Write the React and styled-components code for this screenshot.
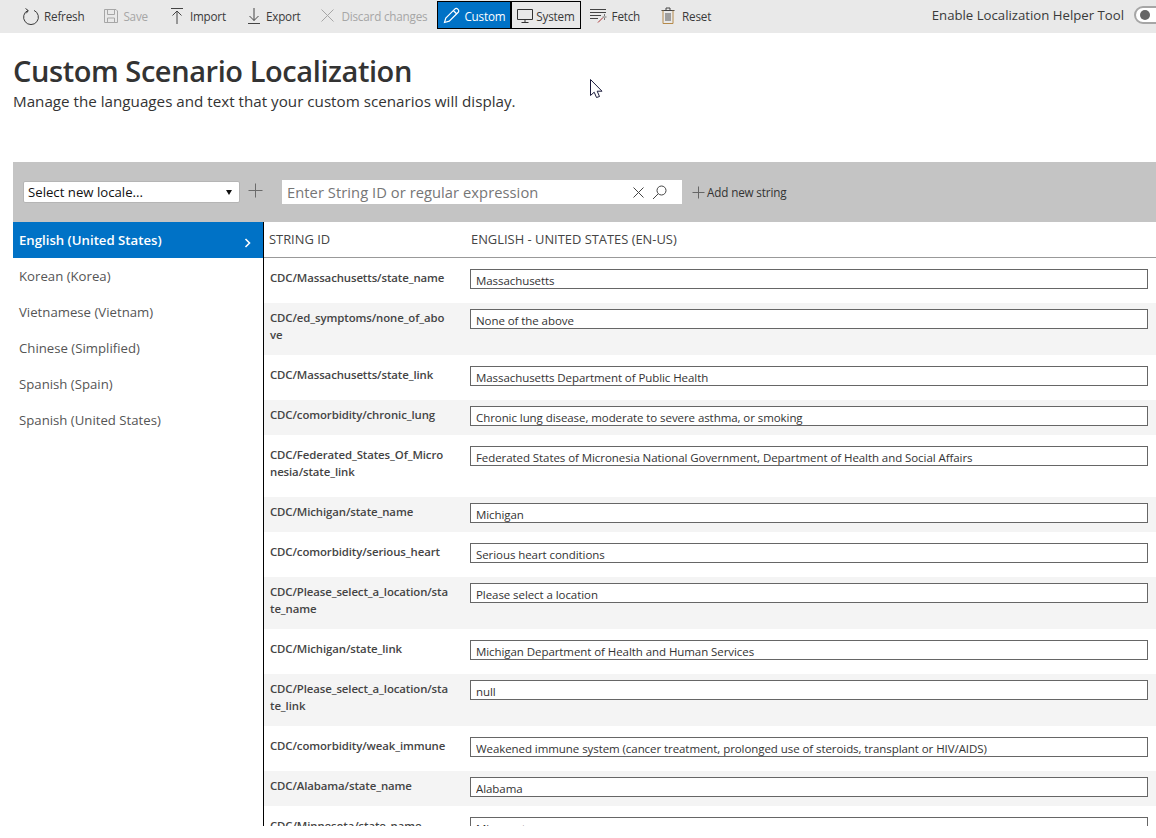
import styled, { createGlobalStyle } from "styled-components";

const GlobalStyle = createGlobalStyle`
  html, body {
    margin: 0;
    padding: 0;
    background: #fff;
    font-family: "Open Sans", "Noto Sans", sans-serif;
  }
`;

const Page = styled.div`
  position: relative;
  width: 1156px;
  height: 826px;
  overflow: hidden;
  background: #fff;
  color: #333;
`;

const Toolbar = styled.div`
  display: flex;
  align-items: center;
  height: 33px;
  padding: 1px 0 4px 22px;
  box-sizing: border-box;
  background: #e9e9e9;
`;

const ToolButton = styled.div`
  display: flex;
  align-items: center;
  gap: ${(p) => p.$gap || 4}px;
  height: 28px;
  margin-right: ${(p) => p.$after || 0}px;
  padding: ${(p) => (p.$boxed ? "1px 5px 0" : "1px 0 0")};
  box-sizing: border-box;
  border: ${(p) => (p.$boxed ? "1px solid #000" : "none")};
  background: ${(p) => (p.$active ? "#0072c6" : "transparent")};
  color: ${(p) => (p.$active ? "#fff" : p.$disabled ? "#a6a6a6" : "#3a3a3a")};
  font-size: 11.7px;
  letter-spacing: -0.2px;
  white-space: nowrap;
`;

const ToggleArea = styled.div`
  display: flex;
  align-items: center;
  gap: 10px;
  margin-left: auto;
  margin-right: -18px;
  font-size: 13.2px;
  color: #3a3a3a;
`;

const ToggleTrack = styled.div`
  display: flex;
  align-items: center;
  width: 40px;
  height: 18px;
  padding-left: 4px;
  box-sizing: border-box;
  border: 2px solid #a6a6a6;
  border-radius: 9px;
  background: #fff;
`;

const ToggleKnob = styled.div`
  width: 10px;
  height: 10px;
  border-radius: 50%;
  background: #666;
`;

const Header = styled.header`
  padding: 20px 0 0 13px;
  height: 129px;
  box-sizing: border-box;
`;

const Title = styled.h1`
  margin: 0;
  font-size: 29px;
  line-height: 36px;
  font-weight: 600;
  letter-spacing: -0.42px;
  color: #333;
`;

const Subtitle = styled.p`
  margin: 0;
  font-size: 15.2px;
  line-height: 24px;
  color: #333;
`;

const FilterBand = styled.div`
  display: flex;
  align-items: center;
  height: 60px;
  margin-left: 13px;
  padding: 0 0 0 10px;
  box-sizing: border-box;
  background: #c4c4c4;
`;

const LocaleSelect = styled.div`
  display: flex;
  align-items: center;
  justify-content: space-between;
  width: 217px;
  height: 22px;
  padding: 0 4px;
  box-sizing: border-box;
  background: #fff;
  border: 1px solid #b5b5b5;
  border-radius: 2px;
  font-size: 13.2px;
  color: #111;
`;

const Caret = styled.span`
  width: 0;
  height: 0;
  margin-right: 3px;
  border-left: 3px solid transparent;
  border-right: 3px solid transparent;
  border-top: 5px solid #111;
`;

const AddLocale = styled.span`
  display: flex;
  margin: -3px 19px 0 8px;
  color: #6b6b6b;
`;

const SearchBox = styled.div`
  display: flex;
  align-items: center;
  width: 400px;
  height: 24px;
  padding: 0 15px 0 5px;
  box-sizing: border-box;
  background: #fff;
`;

const SearchText = styled.span`
  flex: 1;
  font-size: 14.7px;
  letter-spacing: 0.06px;
  color: #767676;
`;

const SearchIcons = styled.span`
  display: flex;
  align-items: center;
  gap: 8px;
  color: #444;
`;

const AddString = styled.div`
  display: flex;
  align-items: center;
  gap: 2px;
  margin-left: 10px;
  font-size: 11.7px;
  letter-spacing: -0.15px;
  color: #333;
`;

const Body = styled.div`
  display: flex;
  margin-left: 13px;
  height: 604px;
`;

const Sidebar = styled.ul`
  flex: none;
  width: 251px;
  margin: 0;
  padding: 0;
  box-sizing: border-box;
  list-style: none;
  border-right: 1px solid #000;
`;

const LocaleItem = styled.li`
  display: flex;
  align-items: center;
  justify-content: space-between;
  height: 36px;
  padding: 0 12px 0 6px;
  box-sizing: border-box;
  background: ${(p) => (p.$active ? "#0072c6" : "transparent")};
  color: ${(p) => (p.$active ? "#fff" : "#555")};
  font-size: 13.2px;
  font-weight: ${(p) => (p.$active ? 600 : 400)};

  svg {
    margin-top: 6px;
  }
`;

const Main = styled.div`
  flex: 1;
  min-width: 0;
`;

const TableHead = styled.div`
  display: grid;
  grid-template-columns: 202px 1fr;
  height: 36px;
  padding: 8px 0 0 5px;
  box-sizing: border-box;
  border-bottom: 1px solid #999;
  font-size: 12.9px;
  line-height: 18px;
  color: #444;
`;

const Row = styled.div`
  display: grid;
  grid-template-columns: 200px 678px;
  column-gap: 0;
  padding: ${(p) => (p.$alt ? "6px 0 9px 6px" : "11px 0 14px 6px")};
  background: ${(p) => (p.$alt ? "#f4f4f4" : "#fff")};
`;

const StringId = styled.div`
  width: 179px;
  padding-bottom: 3px;
  font-size: 11.4px;
  line-height: 17px;
  font-weight: 600;
  letter-spacing: -0.1px;
  color: #444;
  word-break: break-all;
`;

const ValueInput = styled.input`
  width: 678px;
  height: 20px;
  margin: 0;
  padding: 2px 5px 0;
  box-sizing: border-box;
  border: 1px solid #666;
  border-radius: 0;
  outline: none;
  background: #fff;
  font-family: inherit;
  font-size: 11.5px;
  letter-spacing: -0.07px;
  color: #333;
`;

const CursorMark = styled.svg`
  position: absolute;
  left: 590px;
  top: 79px;
`;

const Line = ({ children, w = 16, h = 16, color = "currentColor", sw = 1 }) => (
  <svg width={w} height={h} viewBox={`0 0 ${w} ${h}`} fill="none" stroke={color} strokeWidth={sw}>
    {children}
  </svg>
);

const locales = [
  "English (United States)",
  "Korean (Korea)",
  "Vietnamese (Vietnam)",
  "Chinese (Simplified)",
  "Spanish (Spain)",
  "Spanish (United States)",
];

const strings = [
  ["CDC/Massachusetts/state_name", "Massachusetts"],
  ["CDC/ed_symptoms/none_of_above", "None of the above"],
  ["CDC/Massachusetts/state_link", "Massachusetts Department of Public Health"],
  ["CDC/comorbidity/chronic_lung", "Chronic lung disease, moderate to severe asthma, or smoking"],
  ["CDC/Federated_States_Of_Micronesia/state_link", "Federated States of Micronesia National Government, Department of Health and Social Affairs"],
  ["CDC/Michigan/state_name", "Michigan"],
  ["CDC/comorbidity/serious_heart", "Serious heart conditions"],
  ["CDC/Please_select_a_location/state_name", "Please select a location"],
  ["CDC/Michigan/state_link", "Michigan Department of Health and Human Services"],
  ["CDC/Please_select_a_location/state_link", "null"],
  ["CDC/comorbidity/weak_immune", "Weakened immune system (cancer treatment, prolonged use of steroids, transplant or HIV/AIDS)"],
  ["CDC/Alabama/state_name", "Alabama"],
  ["CDC/Minnesota/state_name", "Minnesota"],
];

const App = () => {
  return (
    <Page>
      <GlobalStyle />
      <Toolbar>
        <ToolButton $after={19}>
          <Line w={18} h={18}>
            <path d="M6 3.4A7.4 7.4 0 1 0 12 3.4" />
            <path d="M3.5 1.5L6.3 3.6L4.3 6.3" />
          </Line>
          Refresh
        </ToolButton>
        <ToolButton $disabled $after={22}>
          <Line w={16} h={16} color="#a6a6a6">
            <path d="M1.5 1.5H13L14.5 3V14.5H1.5Z" />
            <path d="M4.5 1.5V6.5H11.5V1.5M4.5 14.5V10H11.5V14.5" />
          </Line>
          Save
        </ToolButton>
        <ToolButton $gap={6} $after={21}>
          <Line w={14} h={18} color="#444">
            <path d="M1 1.5H13M7 4V17M2.5 8.5L7 4L11.5 8.5" />
          </Line>
          Import
        </ToolButton>
        <ToolButton $gap={5} $after={21}>
          <Line w={14} h={18} color="#444">
            <path d="M7 1V13.5M2.5 9L7 13.5L11.5 9M1 16.5H13" />
          </Line>
          Export
        </ToolButton>
        <ToolButton $disabled $gap={7} $after={10}>
          <Line w={13} h={13} color="#a6a6a6">
            <path d="M0.5 0.5L12.5 12.5M12.5 0.5L0.5 12.5" />
          </Line>
          Discard changes
        </ToolButton>
        <ToolButton $boxed $active $gap={4}>
          <Line w={17} h={17} color="#fff" sw={1.2}>
            <path d="M1.5 15.5L2.8 11L11.5 2.3C12.5 1.3 14 1.3 15 2.3C16 3.3 16 4.5 15 5.5L6.2 14.2Z" />
            <path d="M10.3 3.5L13.8 7" />
          </Line>
          Custom
        </ToolButton>
        <ToolButton $boxed $gap={3} $after={9}>
          <Line w={16} h={14} color="#333">
            <path d="M0.5 0.5H15.5V10.5H0.5ZM8 10.5V13M4.5 13.5H11.5" />
          </Line>
          System
        </ToolButton>
        <ToolButton $gap={5} $after={21}>
          <Line w={17} h={15} color="#444">
            <path d="M0 1.5H16M0 4.5H16M0 7.5H11M0 10.5H8" />
            <path d="M8 14.5L13 9.5" stroke="#a33" />
            <path d="M14.5 8V6M14.5 12V10M16.5 9H12.5" stroke="#777" />
          </Line>
          Fetch
        </ToolButton>
        <ToolButton $gap={7}>
          <Line w={14} h={17} color="#444">
            <path d="M0.5 3.5H13.5M5 3.5V1H9V3.5" />
            <path d="M2 3.5V16.5H12V3.5" stroke="#b58a4a" />
            <path d="M5 6V14M7 6V14M9 6V14" stroke="#555" />
          </Line>
          Reset
        </ToolButton>
        <ToggleArea>
          Enable Localization Helper Tool
          <ToggleTrack>
            <ToggleKnob />
          </ToggleTrack>
        </ToggleArea>
      </Toolbar>

      <Header>
        <Title>Custom Scenario Localization</Title>
        <Subtitle>Manage the languages and text that your custom scenarios will display.</Subtitle>
      </Header>

      <FilterBand>
        <LocaleSelect>
          Select new locale...
          <Caret />
        </LocaleSelect>
        <AddLocale>
          <Line w={15} h={15}>
            <path d="M7.5 0.5V14.5M0.5 7.5H14.5" />
          </Line>
        </AddLocale>
        <SearchBox>
          <SearchText>Enter String ID or regular expression</SearchText>
          <SearchIcons>
            <Line w={11} h={11}>
              <path d="M0.5 0.5L10.5 10.5M10.5 0.5L0.5 10.5" />
            </Line>
            <Line w={15} h={15}>
              <circle cx="9.5" cy="5.5" r="4.5" />
              <path d="M6.2 8.8L1 14" />
            </Line>
          </SearchIcons>
        </SearchBox>
        <AddString>
          <Line w={13} h={13} color="#666">
            <path d="M6.5 0.5V12.5M0.5 6.5H12.5" />
          </Line>
          Add new string
        </AddString>
      </FilterBand>

      <Body>
        <Sidebar>
          {locales.map((name, i) => (
            <LocaleItem key={name} $active={i === 0}>
              {name}
              {i === 0 && (
                <Line w={7} h={10} color="#fff" sw={1.6}>
                  <path d="M1.5 1L5.5 5L1.5 9" />
                </Line>
              )}
            </LocaleItem>
          ))}
        </Sidebar>
        <Main>
          <TableHead>
            <span>STRING ID</span>
            <span>ENGLISH - UNITED STATES (EN-US)</span>
          </TableHead>
          {strings.map(([id, value], i) => (
            <Row key={id} $alt={i % 2 === 1}>
              <StringId>{id}</StringId>
              <ValueInput readOnly defaultValue={value} />
            </Row>
          ))}
        </Main>
      </Body>

      <CursorMark width="14" height="20" viewBox="0 0 14 20" fill="#fff" stroke="#1a1a3a">
        <path d="M0.5 0.5V16.5L4.2 13.2L6.5 18.5L9.5 17.5L7.2 12.2H12Z" />
      </CursorMark>
    </Page>
  );
};

export default App;
